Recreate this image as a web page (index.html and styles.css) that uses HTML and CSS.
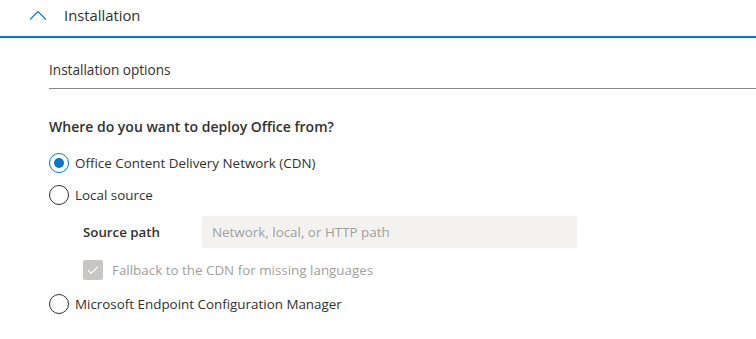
FILE: index.html
```html
<!DOCTYPE html>
<html>
<head>
<meta charset="utf-8">
<link rel="stylesheet" href="styles.css">
</head>
<body>
<div class="section-header">
  <svg class="chevron" width="18" height="10" viewBox="0 0 18 10"><path d="M1 9.5 L9 1.5 L17 9.5" fill="none" stroke="#0078d4" stroke-width="1.1"/></svg>
  <span class="section-title">Installation</span>
</div>
<div class="content">
  <div class="sub-header">Installation options</div>
  <div class="question">Where do you want to deploy Office from?</div>
  <div class="options">
    <label class="radio-row"><span class="radio checked"></span><span>Office Content Delivery Network (CDN)</span></label>
    <label class="radio-row"><span class="radio"></span><span>Local source</span></label>
    <div class="sub-options">
      <div class="field-row">
        <span class="field-label">Source path</span>
        <div class="input">Network, local, or HTTP path</div>
      </div>
      <div class="check-row">
        <span class="checkbox"><svg width="12" height="10" viewBox="0 0 12 10"><path d="M1 5.2 L4.2 8.4 L11 1.6" fill="none" stroke="#fff" stroke-width="1.2"/></svg></span>
        <span>Fallback to the CDN for missing languages</span>
      </div>
    </div>
    <label class="radio-row"><span class="radio"></span><span>Microsoft Endpoint Configuration Manager</span></label>
  </div>
</div>
</body>
</html>
```
FILE: styles.css
```css
* { box-sizing: border-box; }
body {
  margin: 0;
  background: #fff;
  font-family: "Open Sans", "Noto Sans", sans-serif;
  color: #323130;
  font-size: 13.4px;
}
.section-header {
  display: flex;
  align-items: center;
  height: 38px;
  padding-left: 29px;
  padding-bottom: 6px;
  border-bottom: 2px solid #0078d4;
}
.chevron { margin-right: 17px; }
.section-title { font-size: 14.8px; }
.content { padding-left: 49px; }
.sub-header {
  height: 51px;
  padding-top: 22px;
  font-size: 13.6px;
  border-bottom: 1px solid #8a8886;
}
.question {
  margin-top: 28px;
  font-size: 14px;
  font-weight: 600;
  line-height: 20px;
}
.options {
  display: flex;
  flex-direction: column;
  margin-top: 10px;
}
.radio-row {
  display: flex;
  align-items: center;
  gap: 6px;
  height: 32px;
}
.radio {
  width: 20px;
  height: 20px;
  border-radius: 50%;
  border: 1px solid #323130;
  position: relative;
}
.radio.checked { border-color: #0078d4; }
.radio.checked::after {
  content: "";
  position: absolute;
  left: 4px; top: 4px;
  width: 10px; height: 10px;
  border-radius: 50%;
  background: #0078d4;
}
.sub-options { padding-left: 34px; }
.field-row {
  display: flex;
  align-items: center;
  height: 32px;
  margin-top: 5px;
}
.field-label { width: 119px; font-weight: 600; font-size: 13.3px; }
.input {
  width: 375px;
  height: 32px;
  background: #f3f2f1;
  border-radius: 2px;
  padding: 0 10px;
  line-height: 32px;
  color: #a19f9d;
}
.check-row {
  display: flex;
  align-items: center;
  gap: 9px;
  height: 20px;
  margin-top: 12px;
  margin-bottom: 8px;
  color: #a19f9d;
}
.checkbox {
  width: 20px; height: 20px;
  border-radius: 2px;
  background: #c8c6c4;
  display: flex;
  align-items: center;
  justify-content: center;
}
```
